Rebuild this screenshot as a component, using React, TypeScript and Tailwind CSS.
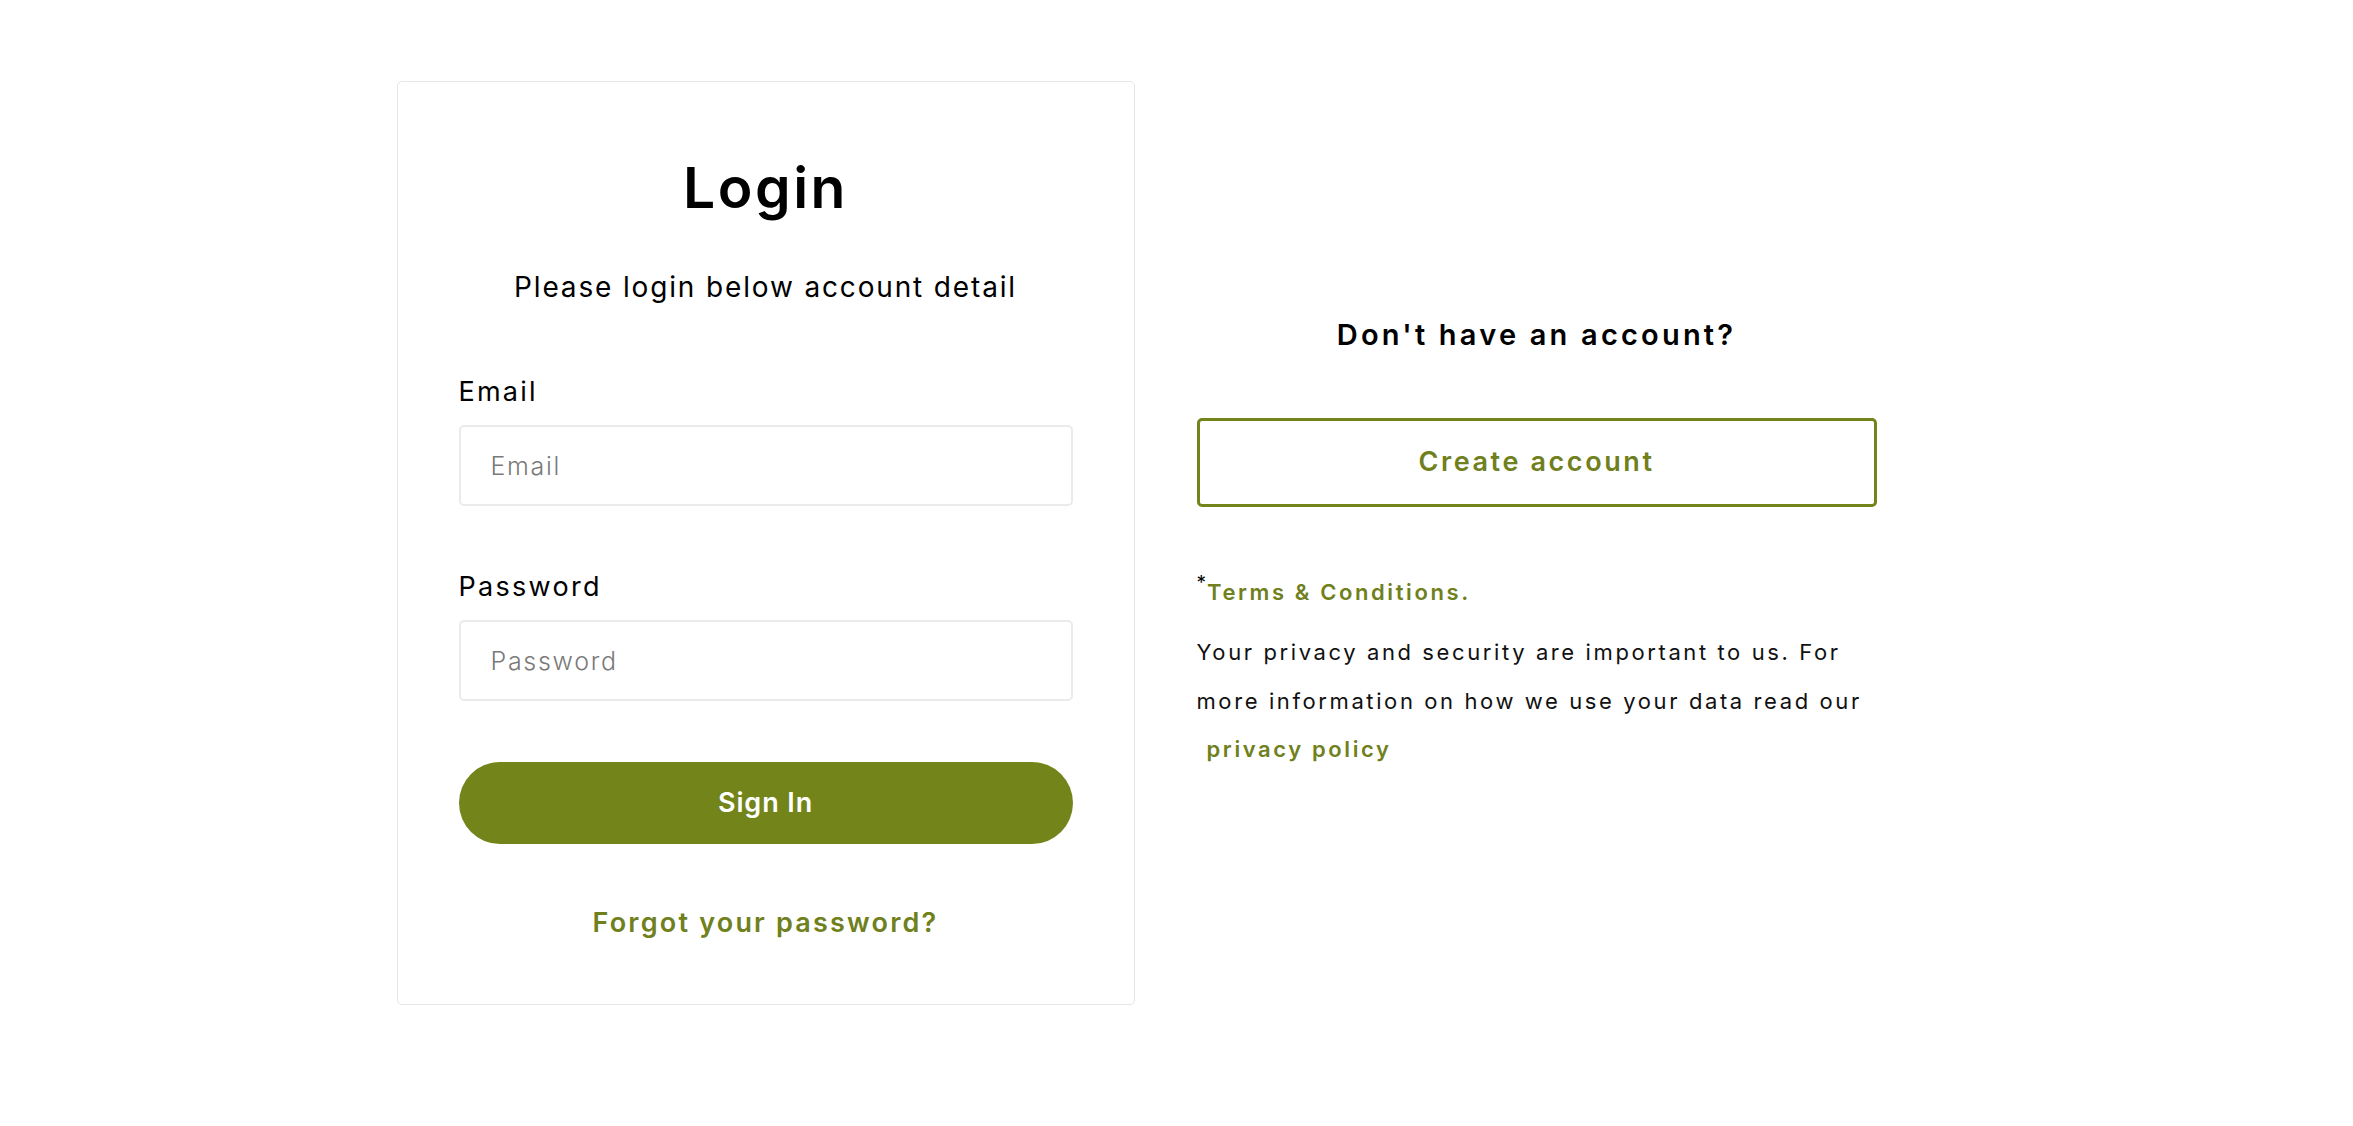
import React from "react";

export default function App() {
  const font = { fontFamily: "Inter, 'Noto Sans', sans-serif" };
  return (
    <div className="min-h-[1126px] w-full bg-white pt-[81px] text-black" style={font}>
      <div className="mx-auto flex w-[1560px] items-start gap-[62px]">
        {/* Login card */}
        <div className="flex w-[738px] flex-col rounded-[5px] border border-[#e6e6e6] px-[61px] pt-[78px] pb-[63px]">
          <h1 className="text-center text-[57px] leading-[56px] font-semibold tracking-[2.5px]">Login</h1>
          <p className="mt-[51px] text-center text-[28px] leading-[40px] tracking-[1.85px]">
            Please login below account detail
          </p>
          <label className="mt-[67px] text-[27px] leading-[36px] tracking-[2.2px]">Email</label>
          <input
            type="email"
            placeholder="Email"
            className="mt-[15px] h-[81px] w-full rounded-[5px] border-2 border-[#ebebeb] px-[30px] text-[25px] font-light tracking-[1.7px] text-black outline-none placeholder:text-[#7a7a7a]"
          />
          <label className="mt-[63px] text-[27px] leading-[36px] tracking-[2.3px]">Password</label>
          <input
            type="password"
            placeholder="Password"
            className="mt-[15px] h-[81px] w-full rounded-[5px] border-2 border-[#ebebeb] px-[30px] text-[25px] font-light tracking-[1.7px] text-black outline-none placeholder:text-[#7a7a7a]"
          />
          <button className="mt-[61px] flex h-[82px] w-full items-center justify-center rounded-full bg-[#73841b] text-[27px] font-semibold tracking-[0.9px] text-white">
            Sign In
          </button>
          <a className="mt-[61px] text-center text-[27px] leading-[36px] font-semibold tracking-[2.2px] text-[#6f801d]">
            Forgot your password?
          </a>
        </div>

        {/* Right column */}
        <div className="flex w-[680px] flex-col pt-[234px]">
          <h2 className="text-center text-[29px] leading-[40px] font-semibold tracking-[3.2px]">Don't have an account?</h2>
          <button className="mt-[63px] flex h-[89px] w-full items-center justify-center rounded-[5px] border-[3px] border-[#73841b] text-[27px] font-semibold tracking-[2.6px] text-[#6f801d]">
            Create account
          </button>
          <div className="mt-[70px] flex items-start text-[22px] leading-[30px]">
            <span className="mt-[-4px] mr-[1px] text-[19px] leading-[19px] text-black">*</span>
            <a className="font-semibold tracking-[2.6px] text-[#6f801d]">Terms &amp; Conditions.</a>
          </div>
          <p className="mt-[21px] text-[22px] leading-[48.5px] tracking-[2.6px] text-[#111]">
            Your privacy and security are important to us. For more information on how we use your data read our{" "}
            <br />
            <a className="ml-[10px] font-semibold tracking-[2.6px] text-[#6f801d]">privacy policy</a>
          </p>
        </div>
      </div>
    </div>
  );
}
